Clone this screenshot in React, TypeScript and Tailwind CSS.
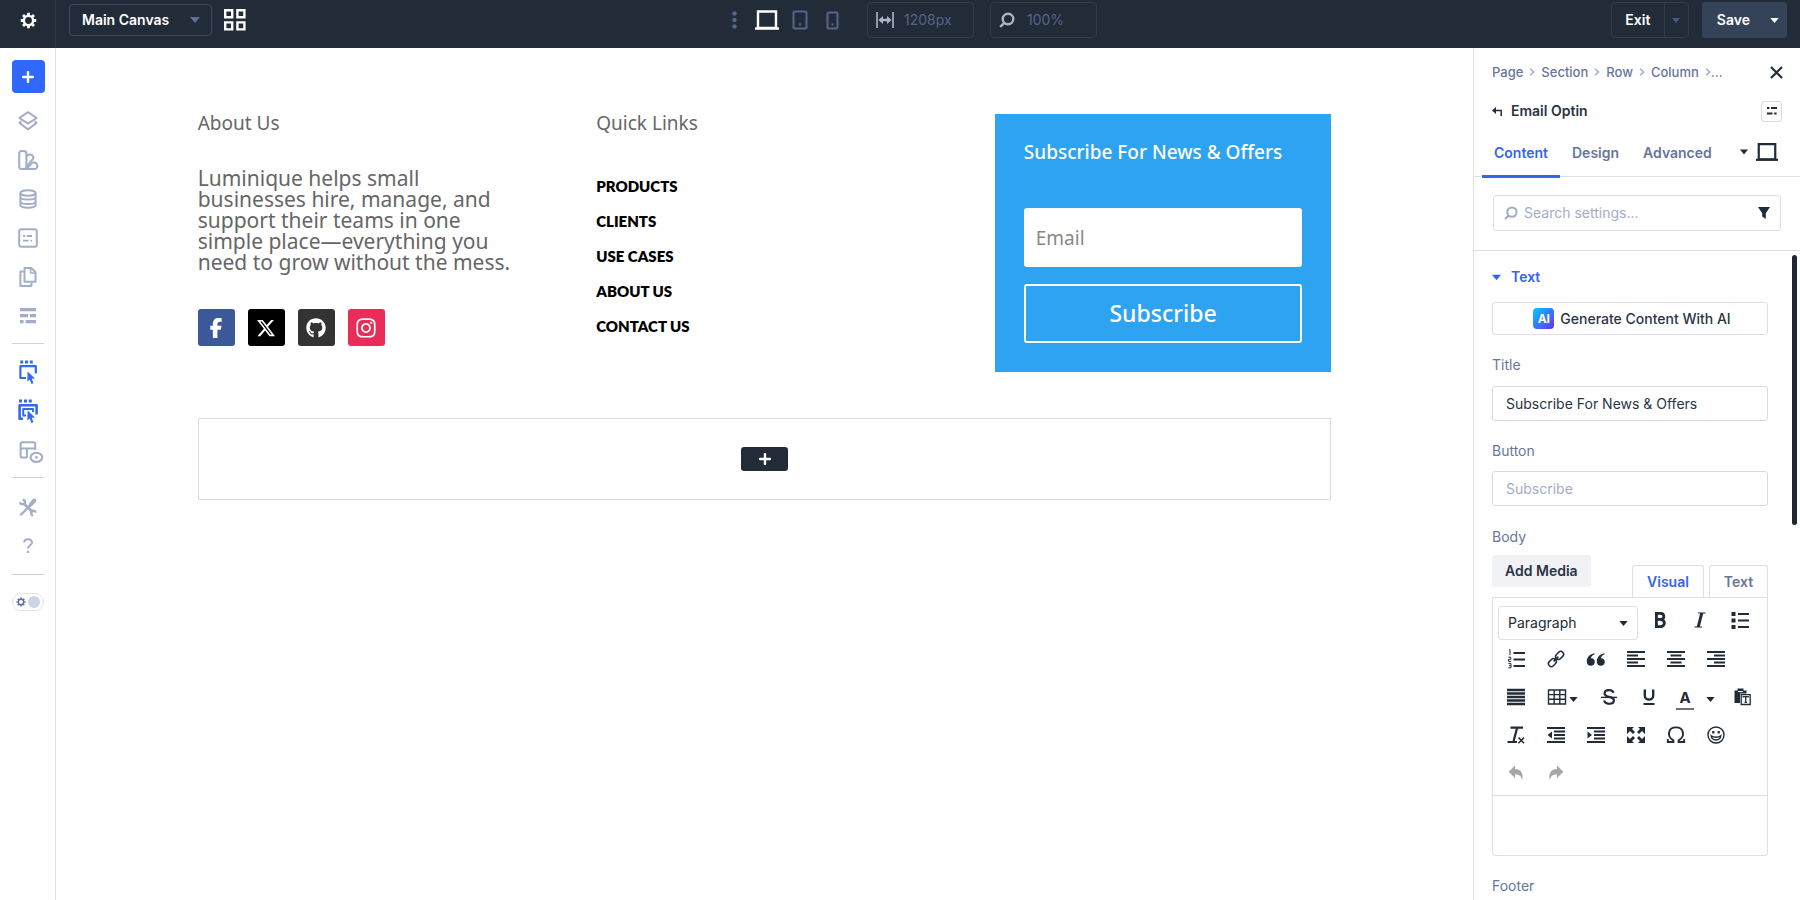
import React, { useState } from 'react';
import { FaFacebookF, FaGithub, FaInstagram, FaXTwitter } from 'react-icons/fa6';

type IconProps = { className?: string };

const Caret = ({ className }: IconProps) => (
  <svg viewBox="0 0 10 6" className={className} fill="currentColor" aria-hidden="true">
    <path d="M0 0h10L5 6z" />
  </svg>
);

const Laptop = ({ className }: IconProps) => (
  <svg viewBox="0 0 24 20" className={className} fill="none" stroke="currentColor" strokeWidth="2.4" aria-hidden="true">
    <path d="M3 1.5h18V18H3z" />
    <path d="M0 18.5h24" />
  </svg>
);

const Plus = ({ className }: IconProps) => (
  <svg viewBox="0 0 12 12" className={className} stroke="currentColor" strokeWidth="2.4" strokeLinecap="round" aria-hidden="true">
    <path d="M6 1v10M1 6h10" />
  </svg>
);

const Gear = ({ className }: IconProps) => (
  <svg viewBox="0 0 18 18" className={className} fill="none" stroke="currentColor" aria-hidden="true">
    <circle cx="9" cy="9" r="4.9" strokeWidth="2.6" />
    <path
      strokeWidth="3"
      d="M9 .8v2.6M9 14.6v2.6M.8 9h2.6M14.6 9h2.6M3.2 3.2l1.9 1.9M12.9 12.9l1.9 1.9M14.8 3.2l-1.9 1.9M5.1 12.9l-1.9 1.9"
    />
  </svg>
);

const SearchIcon = ({ className }: IconProps) => (
  <svg viewBox="0 0 16 16" className={className} fill="none" stroke="currentColor" strokeWidth="2.4" aria-hidden="true">
    <circle cx="9" cy="7" r="5.3" />
    <path d="M5.2 10.8L1.2 14.8" />
  </svg>
);

// 20x20 line icons of the left rail
const Rail = ({ children, title }: { children: React.ReactNode; title: string }) => (
  <button title={title} className="flex h-[39px] w-full items-center justify-center">
    <svg viewBox="0 0 20 20" className="h-5 w-5 overflow-visible" fill="none" stroke="currentColor" strokeWidth="2" strokeLinejoin="round">
      {children}
    </svg>
  </button>
);

const Divider = () => <hr className="w-8 border-0 border-t border-[#cfd3da]" />;

function Sidebar() {
  return (
    <nav className="flex w-14 shrink-0 flex-col items-center border-r border-[#dfe1e6] pt-3 pl-px text-[#a3adc8]">
      <button title="Add" className="mb-2 flex h-[33px] w-[33px] items-center justify-center rounded bg-[#2f67ff] text-white">
        <Plus className="h-3 w-3" />
      </button>
      <Rail title="Layers">
        <path d="M10 1.2L18.6 7 10 12.6 1.4 7z" />
        <path d="M3.4 10.2L1.4 12 10 18.4 18.6 12l-2-1.8" />
      </Rail>
      <Rail title="Presets">
        <rect x="1.2" y="1" width="7.2" height="18" rx="2.5" />
        <path d="M8.4 6l2.5-1.3c2.6-1 5.2 1.2 4 4.2L8.4 17" />
        <path d="M6 19h11c3 0 3.2-6-.6-6.6h-1.8L8.4 19" />
      </Rail>
      <Rail title="Data">
        <ellipse cx="10" cy="4" rx="7.6" ry="2.8" />
        <path d="M2.4 4v12c0 3.6 15.2 3.6 15.2 0V4M2.4 8c0 3.4 15.2 3.4 15.2 0M2.4 12.4c0 3.4 15.2 3.4 15.2 0" />
      </Rail>
      <Rail title="Variables">
        <rect x="1.2" y="1.2" width="17.6" height="17.6" rx="2.2" />
        <path d="M5 8h2.2M8.6 8H14M5 12.6h5.6M12.4 12.6H14" strokeWidth="1.8" />
      </Rail>
      <Rail title="Pages">
        <path d="M6.5 1h6.8l4.2 4.2v9.6h-11z" />
        <path d="M12.6 1v5h5" strokeWidth="1.6" />
        <path d="M5.6 4.6H2.4V19h11v-3" />
      </Rail>
      <Rail title="Wireframe">
        <path d="M2 3.6h16M2 9.6h8M11.8 9.6H18M2 15.6h3.6M7.6 15.6H18" strokeWidth="3.2" />
      </Rail>
      <div className="my-2">
        <Divider />
      </div>
      <div className="w-full text-[#3569f0]">
        <Rail title="Click mode">
          <path d="M2.2 0h3M7 0h3M11.8 0h3" strokeWidth="3" />
          <path d="M8 16H2.4V4.2h15.4v7.4" strokeWidth="2.2" />
          <path d="M9.6 9.4l7.4 7-3.2.4 1.6 4.4-2 .8-1.7-4.5-2.4 2z" fill="currentColor" stroke="none" />
        </Rail>
        <Rail title="Grid mode">
          <path d="M1 0h3M6 0h3M10.8 0h3" strokeWidth="3" />
          <path d="M5 17.8H1.6V4.2h17v9.4" strokeWidth="2.6" />
          <path d="M8 14.4H5.2V8h9.8v3" strokeWidth="2" />
          <path d="M9.6 9.4l7.4 7-3.2.4 1.6 4.4-2 .8-1.7-4.5-2.4 2z" fill="currentColor" stroke="none" />
        </Rail>
      </div>
      <Rail title="Hidden modules">
        <path d="M9 17.600H4.400a1.800 1.800 0 01-1.800-1.800V4a1.800 1.800 0 011.800-1.800h11A1.800 1.800 0 0117.200 4v6M2.600 8.400h14.600M9 8.400v9.200" />
        <ellipse cx="18.400" cy="17.400" rx="5.800" ry="4.600" fill="#fff" />
        <circle cx="18.400" cy="17.400" r="1.400" fill="currentColor" stroke="none" />
      </Rail>
      <div className="mt-2 mb-[9px]">
        <Divider />
      </div>
      <Rail title="Tools">
        <path d="M3 17.600L17 3.600" strokeWidth="2.200" strokeLinecap="round" />
        <path d="M12.600 7.800l3.600-4.200" strokeWidth="4" strokeLinecap="round" />
        <path d="M5.200 6l9.800 9.400" strokeWidth="2.800" />
        <path d="M4.600 2.600c3.400.6 3.400 4.600-.1 4.600-1.400 0-2.300-.8-2.500-2M17.900 15.600c-1-3-5-2.400-4.800.8.100 1 .8 1.800 2 1.900" strokeWidth="2.200" />
      </Rail>
      <Rail title="Help">
        <path d="M6.200 6.600C6.200 2.200 14 2.200 14 6.500c0 2.900-4 2.700-4 6" />
        <path d="M10 14.800v2.200" strokeWidth="2.200" />
      </Rail>
      <div className="mt-[9px] mb-[18px]">
        <Divider />
      </div>
      <button title="Dark mode" className="flex h-[18px] w-8 items-center justify-between rounded-full border border-[#e1e4ec] px-[3px]">
        <Gear className="h-[10px] w-[10px] text-[#5f6f98]" />
        <span className="h-3 w-3 rounded-full bg-[#cdd4e4]" />
      </button>
    </nav>
  );
}

function TopBar() {
  return (
    <header className="flex h-12 shrink-0 items-start justify-between bg-[#222b38] text-white">
      <div className="flex flex-1">
        <button title="Settings" className="flex h-12 w-14 items-center justify-center border-r border-[#2e3846] pb-2 pl-[2px]">
          <Gear className="h-[17px] w-[17px]" />
        </button>
        <div className="relative mt-1 ml-[13px]">
          <select aria-label="Canvas" className="h-8 w-[143px] appearance-none rounded border border-[#3c4860] bg-transparent pl-3 text-sm font-semibold">
            <option>Main Canvas</option>
          </select>
          <Caret className="pointer-events-none absolute top-[13px] right-3 h-[6px] w-[10px] text-[#5d6d9a]" />
        </div>
        <button title="Canvases" className="mt-[9px] ml-3 h-[22px] w-[22px]">
          <svg viewBox="0 0 22 22" fill="none" stroke="currentColor" strokeWidth="2.400">
            <path d="M1.200 1.200h7v7h-7zM13.400 1.200h7v7h-7zM1.200 13.400h7v7h-7zM13.400 13.400h7v7h-7z" />
          </svg>
        </button>
      </div>

      <div className="mt-[2px] ml-[42px] flex h-9 items-center text-[#56648c]">
        <button title="More">
          <svg viewBox="0 0 5 18" className="h-[18px] w-[5px]" fill="currentColor">
            <circle cx="2.500" cy="2.500" r="2.200" />
            <circle cx="2.500" cy="9" r="2.200" />
            <circle cx="2.500" cy="15.500" r="2.200" />
          </svg>
        </button>
        <button title="Desktop" className="ml-[18px] text-white">
          <Laptop className="h-5 w-6" />
        </button>
        <button title="Tablet" className="ml-[13px]">
          <svg viewBox="0 0 16 20" className="h-5 w-4" fill="none" stroke="currentColor" strokeWidth="2">
            <rect x="1.500" y="1.500" width="13" height="17" rx="1" />
            <path d="M7 14.500h2" />
          </svg>
        </button>
        <button title="Phone" className="ml-[18px]">
          <svg viewBox="0 0 13 20" className="h-5 w-[13px]" fill="none" stroke="currentColor" strokeWidth="2">
            <rect x="1.500" y="2.500" width="10" height="16" rx="1" />
            <path d="M5.500 14.500h2" />
          </svg>
        </button>
        <label className="ml-7 flex h-9 w-[107px] items-center rounded border border-[#303b4b] pl-2">
          <svg viewBox="0 0 18 16" className="h-4 w-[18px] shrink-0 text-[#aab4cc]" fill="none" stroke="currentColor" strokeWidth="1.600">
            <path d="M1 0v16M17 0v16" />
            <path d="M4 8h10" strokeWidth="2.400" />
            <path d="M2.500 8l4.500-4v8zM15.500 8L11 4v8z" fill="currentColor" stroke="none" />
          </svg>
          <input aria-label="Width" defaultValue="1208px" className="ml-[10px] w-14 bg-transparent text-sm outline-none" />
        </label>
        <label className="ml-4 flex h-9 w-[107px] items-center rounded border border-[#303b4b] pl-2">
          <SearchIcon className="h-4 w-4 shrink-0 text-[#aab4cc]" />
          <input aria-label="Zoom" defaultValue="100%" className="ml-3 w-14 bg-transparent text-sm outline-none" />
        </label>
      </div>

      <div className="mt-[2px] flex flex-1 justify-end pr-[13px] text-sm font-semibold">
        <div className="flex h-9 rounded border border-[#303b4b]">
          <button className="w-[53px] border-r border-[#303b4b]">Exit</button>
          <button title="Exit options" className="flex w-[23px] items-center justify-center text-[#4c5a80]">
            <Caret className="h-[5px] w-[8px]" />
          </button>
        </div>
        <div className="ml-[13px] flex h-9 items-center rounded bg-[#354359]">
          <button className="pl-[15px]">Save</button>
          <button title="Save options" className="flex h-full items-center pr-2 pl-5">
            <Caret className="h-[5px] w-[9px]" />
          </button>
        </div>
      </div>
    </header>
  );
}

const links = ['Products', 'Clients', 'Use Cases', 'About Us', 'Contact Us'];

function Canvas() {
  return (
    <main className="min-w-0 flex-1 overflow-hidden pt-[66px] font-['Noto_Sans',sans-serif] text-[#666]">
      <div className="mx-auto grid w-4/5 grid-cols-3 gap-x-[62px]">
        <section>
          <h4 className="text-[19px] leading-[18px]">About Us</h4>
          <p className="mt-9 pr-4 text-[21px] leading-[21px]">
            Luminique helps small businesses hire, manage, and support their teams in one simple place—everything you need to grow without the mess.
          </p>
          <div className="mt-9 flex gap-[13px] text-white">
            <a href="#" aria-label="Facebook" className="flex h-[37px] w-[37px] items-center justify-center rounded-[3px] bg-[#3b5998]">
              <FaFacebookF size={20} />
            </a>
            <a href="#" aria-label="X" className="flex h-[37px] w-[37px] items-center justify-center rounded-[3px] bg-black">
              <FaXTwitter size={20} />
            </a>
            <a href="#" aria-label="GitHub" className="flex h-[37px] w-[37px] items-center justify-center rounded-[3px] bg-[#333]">
              <FaGithub size={20} />
            </a>
            <a href="#" aria-label="Instagram" className="flex h-[37px] w-[37px] items-center justify-center rounded-[3px] bg-[#ea2c59]">
              <FaInstagram size={22} />
            </a>
          </div>
        </section>

        <section>
          <h4 className="text-[19px] leading-[18px]">Quick Links</h4>
          <ul className="mt-[37px] font-['Lato',sans-serif] text-[15px] leading-[35px] font-extrabold text-black uppercase">
            {links.map((l) => (
              <li key={l}>
                <a href="#">{l}</a>
              </li>
            ))}
          </ul>
        </section>

        <form className="bg-[#2ea3f2] p-[29px] text-white" onSubmit={(e) => e.preventDefault()}>
          <h2 className="text-[19px] leading-[18px] font-medium">Subscribe For News &amp; Offers</h2>
          <input
            type="email"
            aria-label="Email"
            placeholder="Email"
            className="mt-[47px] h-[59px] w-full rounded-[3px] bg-white px-3 text-[19px] text-[#666] placeholder:text-[#888]"
          />
          <button className="mt-[17px] h-[59px] w-full rounded-[3px] border-2 border-white text-[23px] font-medium">Subscribe</button>
        </form>
      </div>

      <div className="mx-auto mt-[46px] flex h-[82px] w-4/5 items-center justify-center border border-[#dcdcdc]">
        <button title="Add row" className="flex h-6 w-[47px] items-center justify-center rounded-[3px] bg-[#222b38] text-white">
          <Plus className="h-3 w-3" />
        </button>
      </div>
    </main>
  );
}

const ToolButton = ({ title, children, wide }: { title: string; children: React.ReactNode; wide?: boolean }) => (
  <button title={title} className={`flex h-full items-center justify-center gap-[2px] ${wide ? 'w-[53px]' : 'w-10'}`}>
    {children}
  </button>
);

const Glyph = ({ children, width = 2.2 }: { children: React.ReactNode; width?: number }) => (
  <svg viewBox="0 0 20 20" className="h-5 w-5 shrink-0" fill="none" stroke="currentColor" strokeWidth={width}>
    {children}
  </svg>
);

const ArrowCorner = () => <path d="M1 2h7L6 4l3 3-2 2-3-3-3 3z" />;

function Editor() {
  const [body, setBody] = useState('');
  return (
    <div>
      <div className="flex items-start justify-between">
        <button className="h-8 rounded-[3px] bg-[#f1f2f6] px-[13px] font-semibold text-[#2b3444]">Add Media</button>
        <div className="mt-[10px] flex gap-[5px] font-semibold text-[#68769a]">
          <button className="h-8 w-[72px] rounded-t-[3px] border border-b-0 border-[#dcdfe6] text-[#3565ea]">Visual</button>
          <button className="h-8 w-[59px] rounded-t-[3px] border border-b-0 border-[#dcdfe6]">Text</button>
        </div>
      </div>
      <div className="rounded-b-[3px] border border-[#dcdfe6] text-[#222b38]">
        <div className="border-b border-[#dcdfe6] pb-[3px] pl-[3px]">
          <div className="flex items-start pt-2">
            <div className="relative mr-[2px] ml-[2px]">
              <select aria-label="Format" className="h-[34px] w-[140px] appearance-none rounded-[3px] border border-[#dcdfe6] pl-[9px] text-sm">
                <option>Paragraph</option>
              </select>
              <Caret className="pointer-events-none absolute top-[15px] right-[10px] h-[5px] w-[9px]" />
            </div>
            <div className="flex h-7">
              <ToolButton title="Bold">
                <Glyph width={2.800}>
                  <path d="M6.400 3.400v13.200M5 3.400h5.500c4.400 0 4.400 6 0 6H7M10.500 9.600c5.200 0 5.200 7 0 7H5" />
                </Glyph>
              </ToolButton>
              <ToolButton title="Italic">
                <Glyph width={1.200}>
                  <path d="M8 3h7.500M4.500 17H12" />
                  <path d="M11.800 3L8.200 17" strokeWidth="3" />
                </Glyph>
              </ToolButton>
              <ToolButton title="Bullet list">
                <Glyph>
                  <path d="M8 4h11M8 10.500h11M8 17h11" />
                  <path d="M1.500 4h4M1.500 10.500h4M1.500 17h4" strokeWidth="4" />
                </Glyph>
              </ToolButton>
            </div>
          </div>
          <div className="flex h-[38px]">
            <ToolButton title="Numbered list">
              <Glyph>
                <path d="M7.500 4H19M7.500 10.500H19M7.500 17H19" />
                <path d="M3 1l1-.5V6M2.400 8.200h2.400v2.200H2.600v2h2.600M2.400 14.600h2.600v4.200H2.400M3 16.700h2" strokeWidth="1" />
              </Glyph>
            </ToolButton>
            <ToolButton title="Link">
              <Glyph width={1.500}>
                <rect x="-4.400" y="-2.900" width="8.800" height="5.800" rx="2.900" transform="translate(13.600 6.400) rotate(-45)" />
                <rect x="-4.400" y="-2.900" width="8.800" height="5.800" rx="2.900" transform="translate(6.400 13.600) rotate(-45)" />
                <path d="M7.600 12.400l4.800-4.800" />
              </Glyph>
            </ToolButton>
            <ToolButton title="Quote">
              <Glyph>
                <g fill="currentColor" stroke="none">
                  <path d="M8.400 4.300C4 5 .8 8.200.8 12.400c0 2.600 1.600 4.400 4 4.400 2.200 0 4-1.600 4-3.900 0-2.200-1.600-3.800-3.900-3.600.4-2 1.600-3.200 3.700-4z" />
                  <path d="M18.400 4.300c-4.400.7-7.600 3.900-7.600 8.100 0 2.600 1.600 4.400 4 4.400 2.200 0 4-1.600 4-3.900 0-2.200-1.600-3.800-3.900-3.600.4-2 1.600-3.200 3.700-4z" />
                </g>
              </Glyph>
            </ToolButton>
            <ToolButton title="Align left">
              <Glyph>
                <path d="M1 3h18M1 6.500h11M1 10h18M1 13.500h11M1 17h18" />
              </Glyph>
            </ToolButton>
            <ToolButton title="Align center">
              <Glyph>
                <path d="M1 3h18M4.500 6.500h11M1 10h18M4.500 13.500h11M1 17h18" />
              </Glyph>
            </ToolButton>
            <ToolButton title="Align right">
              <Glyph>
                <path d="M1 3h18M8 6.500h11M1 10h18M8 13.500h11M1 17h18" />
              </Glyph>
            </ToolButton>
          </div>
          <div className="flex h-[38px]">
            <ToolButton title="Justify">
              <Glyph width={2.400}>
                <path d="M1 3h18M1 6.500h18M1 10h18M1 13.500h18M1 17h18" />
              </Glyph>
            </ToolButton>
            <ToolButton title="Table" wide>
              <Glyph width={1.400}>
                <path d="M1.500 3h17v14h-17zM1.500 7.600h17M1.500 12.300h17M7.200 3v14M12.800 3v14" />
              </Glyph>
              <Caret className="mt-1 h-[5px] w-[9px]" />
            </ToolButton>
            <ToolButton title="Strikethrough">
              <Glyph>
                <path d="M14.500 5.800C13.500 2 5.600 2.200 5.600 6.400c0 4.600 9.300 2.300 9.300 6.900 0 4.600-8.700 4.600-9.800.2" />
                <path d="M2 10.400h16" strokeWidth="1.400" />
              </Glyph>
            </ToolButton>
            <ToolButton title="Underline">
              <Glyph>
                <path d="M5.800 2.500v6.200c0 5 8.400 5 8.400 0V2.500" strokeWidth="2.400" />
                <path d="M4.500 17h11" strokeWidth="2" />
              </Glyph>
            </ToolButton>
            <ToolButton title="Text color" wide>
              <span className="flex w-[18px] flex-col items-center border-b-2 border-[#6c727c] pt-1 text-[15px] leading-5 font-bold">A</span>
              <Caret className="mt-1 ml-[10px] h-[5px] w-[9px]" />
            </ToolButton>
            <ToolButton title="Paste as text">
              <Glyph>
                <path d="M2.500 3.500h3v-2h6v2h3v3H8v9.500H2.500z" fill="currentColor" stroke="none" />
                <path d="M6 4.600h5" stroke="#fff" strokeWidth="1" />
                <path d="M9.200 7.700h9v9.800h-9zM11.200 10.600v-1h5v1M13.700 9.600v6M12.500 15.400h2.400" strokeWidth="1.300" />
              </Glyph>
            </ToolButton>
          </div>
          <div className="flex h-[38px]">
            <ToolButton title="Clear formatting">
              <Glyph>
                <path d="M4.500 2.600h12.500M1.500 17h9.500" />
                <path d="M11.200 2.600L7.600 16" strokeWidth="2.200" />
                <path d="M12.500 12.500l5.500 5.700M18 12.500l-5.500 5.700" strokeWidth="1.600" />
              </Glyph>
            </ToolButton>
            <ToolButton title="Outdent">
              <Glyph>
                <path d="M1 3h18M8 6.500h11M8 10h11M8 13.500h11M1 17h18" />
                <path d="M6 6.500v7L1.500 10z" fill="currentColor" stroke="none" />
              </Glyph>
            </ToolButton>
            <ToolButton title="Indent">
              <Glyph>
                <path d="M1 3h18M8 6.500h11M8 10h11M8 13.500h11M1 17h18" />
                <path d="M1.500 6.500v7L6 10z" fill="currentColor" stroke="none" />
              </Glyph>
            </ToolButton>
            <ToolButton title="Fullscreen">
              <Glyph>
                <g fill="currentColor" stroke="none">
                  <ArrowCorner />
                  <g transform="translate(20 0) scale(-1 1)">
                    <ArrowCorner />
                  </g>
                  <g transform="translate(0 20) scale(1 -1)">
                    <ArrowCorner />
                  </g>
                  <g transform="translate(20 20) scale(-1 -1)">
                    <ArrowCorner />
                  </g>
                </g>
              </Glyph>
            </ToolButton>
            <ToolButton title="Special character">
              <Glyph width={1.900}>
                <path d="M1.800 14v3h5.600v-1.600C.6 11.600 1.800 2.400 10 2.400s9.400 9.200 2.600 13V17h5.600v-3" />
              </Glyph>
            </ToolButton>
            <ToolButton title="Emoji">
              <Glyph width={1.400}>
                <circle cx="10" cy="10" r="8" />
                <path d="M5.200 10.800c.6 5.600 9 5.600 9.600 0-2.600 2-7 2-9.600 0z" />
                <path d="M7.300 6v2.400M12.700 6v2.400" strokeWidth="2.200" />
              </Glyph>
            </ToolButton>
          </div>
          <div className="flex h-[38px] text-[#a6a8ac]">
            <ToolButton title="Undo">
              <Glyph>
                <path d="M9 2.500V6c6 0 9 4.500 7 11.500-.5-4.500-2.600-6-7-6V15L2.600 8.700z" fill="currentColor" stroke="none" />
              </Glyph>
            </ToolButton>
            <ToolButton title="Redo">
              <Glyph>
                <path d="M11 2.500V6c-6 0-9 4.500-7 11.500.5-4.500 2.600-6 7-6V15l6.400-6.300z" fill="currentColor" stroke="none" />
              </Glyph>
            </ToolButton>
          </div>
        </div>
        <textarea
          aria-label="Body"
          value={body}
          onChange={(e) => setBody(e.target.value)}
          className="block h-[59px] w-full resize-none p-2 outline-none"
        />
      </div>
    </div>
  );
}

const tabs = ['Content', 'Design', 'Advanced'];
const crumbs = ['Page', 'Section', 'Row', 'Column'];

function SettingsPanel() {
  const [active, setActive] = useState('Content');
  return (
    <aside className="relative flex w-[327px] shrink-0 flex-col overflow-hidden border-l border-[#dfe1e6] text-sm text-[#68769a]">
      <div className="flex h-12 items-center justify-between pr-[17px] pl-[18px]">
        <div className="flex items-center gap-[6px] text-[13px] font-medium">
          {crumbs.map((c) => (
            <React.Fragment key={c}>
              <a href="#">{c}</a>
              <svg viewBox="0 0 6 8" className="h-2 w-[6px] text-[#a3adc8]" fill="none" stroke="currentColor" strokeWidth="1.500">
                <path d="M1 .8L4.600 4 1 7.200" />
              </svg>
            </React.Fragment>
          ))}
          <span className="-ml-[6px]">...</span>
        </div>
        <button title="Close" className="text-[#222b38]">
          <svg viewBox="0 0 13 13" className="h-[13px] w-[13px]" stroke="currentColor" strokeWidth="2.200">
            <path d="M1 1l11 11M12 1L1 12" />
          </svg>
        </button>
      </div>

      <div className="flex h-[30px] items-center pr-[18px] pl-[18px]">
        <button title="Back" className="text-[#222b38]">
          <svg viewBox="0 0 10 9" className="h-[9px] w-[10px]" fill="none" stroke="currentColor" strokeWidth="1.500">
            <path d="M1.500 3.500h7.700V9" />
            <path d="M4 0v7L0 3.500z" fill="currentColor" stroke="none" />
          </svg>
        </button>
        <h2 className="ml-[9px] flex-1 font-semibold text-[#2b3444]">Email Optin</h2>
        <button title="Presets" className="flex h-[21px] w-[21px] items-center justify-center rounded-[3px] border border-[#d5d9e2] text-[#222b38]">
          <svg viewBox="0 0 10 10" className="h-[10px] w-[10px]" stroke="currentColor" strokeWidth="2">
            <path d="M0 2h2.400M4 2h6M0 7.500h5.500M7.200 7.500h2.400" />
          </svg>
        </button>
      </div>

      <div className="flex h-[51px] items-stretch border-b border-[#dcdfe6] pr-[22px] pl-2">
        {tabs.map((t) => (
          <button
            key={t}
            onClick={() => setActive(t)}
            className={`-mb-[2px] border-b-[3px] px-3 pt-1 font-semibold ${
              active === t ? 'border-[#3565ea] text-[#3565ea]' : 'border-transparent'
            }`}
          >
            {t}
          </button>
        ))}
        <button title="Device" className="ml-auto flex items-center gap-2 pt-[2px] text-[#222b38]">
          <Caret className="h-[6px] w-2" />
          <Laptop className="h-5 w-[22px]" />
        </button>
      </div>

      <div className="border-b border-[#dcdfe6] pt-[18px] pr-[19px] pb-[19px] pl-[19px]">
        <label className="flex h-9 items-center rounded-[3px] border border-[#dcdfe6] px-[10px]">
          <SearchIcon className="h-[14px] w-[14px] text-[#a3adc8]" />
          <input aria-label="Search settings" placeholder="Search settings..." className="ml-[6px] min-w-0 flex-1 outline-none placeholder:text-[#a3adc8]" />
          <svg viewBox="0 0 12 12" className="h-3 w-3 text-[#222b38]" fill="currentColor">
            <path d="M0 0h12L7.800 6.200V12L4.200 9.600V6.200z" />
          </svg>
        </label>
      </div>

      <div className="pr-8 pl-[18px]">
        <button className="mt-4 flex h-5 items-center gap-[10px] font-semibold text-[#3565ea]">
          <Caret className="h-[7px] w-[9px]" />
          Text
        </button>
        <button className="mt-[15px] flex h-[33px] w-full items-center justify-center gap-[6px] rounded-[3px] border border-[#dcdfe6] pl-1 font-medium text-[#2b3444]">
          <span className="flex h-[21px] w-[21px] items-center justify-center rounded bg-linear-to-br from-[#00c8ff] via-[#2f7bff] to-[#5a22f5] text-xs font-bold text-white">
            AI
          </span>
          Generate Content With AI
        </button>
        <label htmlFor="title" className="mt-5 block leading-5">
          Title
        </label>
        <input id="title" defaultValue="Subscribe For News & Offers" className="mt-[11px] h-[35px] w-full rounded-[3px] border border-[#d5d9e2] px-[13px] text-[#2b3444]" />
        <label htmlFor="button" className="mt-5 block leading-5">
          Button
        </label>
        <input id="button" placeholder="Subscribe" className="mt-[10px] h-[35px] w-full rounded-[3px] border border-[#d5d9e2] px-[13px] placeholder:text-[#a3adc8]" />
        <div className="mt-[21px] mb-2 leading-5">Body</div>
        <Editor />
        <div className="mt-5 leading-5">Footer</div>
      </div>

      {/* scroll thumb */}
      <div className="absolute top-[207px] right-[3px] h-[270px] w-[5px] rounded-full bg-[#1f2733]" />
    </aside>
  );
}

export default function App() {
  return (
    <div className="flex h-screen flex-col bg-white font-['Inter',sans-serif]">
      <TopBar />
      <div className="flex min-h-0 flex-1">
        <Sidebar />
        <Canvas />
        <SettingsPanel />
      </div>
    </div>
  );
}
